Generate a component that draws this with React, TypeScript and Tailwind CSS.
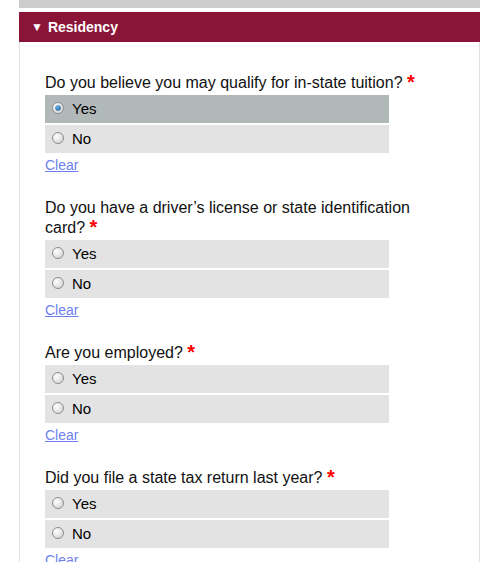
import React from 'react';

const questions = [
    { id: 'instate', text: 'Do you believe you may qualify for in-state tuition?', value: 'yes' },
    { id: 'license', text: 'Do you have a driver\u2019s license or state identification card?', value: '' },
    { id: 'employed', text: 'Are you employed?', value: '' },
    { id: 'tax', text: 'Did you file a state tax return last year?', value: '' },
];

const Radio = ({ checked }: { checked: boolean }) => (
    <svg width="12" height="12" viewBox="0 0 12 12" className="shrink-0">
        <defs>
            <radialGradient id="rbg" cx="0.35" cy="0.35" r="0.8">
                <stop offset="0" stopColor="#ffffff" />
                <stop offset="1" stopColor="#d0d0d0" />
            </radialGradient>
            <radialGradient id="rdot" cx="0.4" cy="0.35" r="0.7">
                <stop offset="0" stopColor="#6fb4ec" />
                <stop offset="1" stopColor="#1d5f9f" />
            </radialGradient>
        </defs>
        <circle cx="6" cy="6" r="5.5" fill="url(#rbg)" stroke="#8b8e90" strokeWidth="1" />
        {checked && <circle cx="6" cy="6" r="2.8" fill="url(#rdot)" />}
    </svg>
);

const Option = ({ label, checked }: { label: string; checked: boolean }) => (
    <label className={`flex items-center h-[28px] pl-[7px] gap-[8px] ${checked ? 'bg-[#b1b8b8]' : 'bg-[#e3e3e3]'}`}>
        <span className="-mt-[3px] flex"><Radio checked={checked} /></span>
        <span className="text-[15px] text-black">{label}</span>
    </label>
);

export default function App() {
    return (
        <div className="min-h-[562px] bg-white font-['Liberation_Sans',Arial,sans-serif]">
            <div className="ml-[19px] w-[461px]">
                <div className="h-[8px] bg-[#cccccc]" />
                <div className="mt-[4px] h-[30px] bg-[#8a1538] flex items-center pl-[12px] text-white font-bold text-[14px]">
                    <span className="text-[12px] mr-[5px]">▼</span>
                    <span>Residency</span>
                </div>
                <div className="border-x border-[#e0e0e0] pl-[25px] pt-[31px] pb-[20px]">
                    {questions.map((q) => (
                        <div key={q.id} className="mb-[24px]">
                            <p className="text-[16px] leading-[20px] text-[#111] w-[380px] mb-[2px]">
                                {q.text} <span className="text-[#ff0000] font-bold text-[20px] leading-[0] relative top-[1px]">*</span>
                            </p>
                            <div className="w-[344px] flex flex-col gap-[2px]">
                                <Option label="Yes" checked={q.value === 'yes'} />
                                <Option label="No" checked={q.value === 'no'} />
                            </div>
                            <a href="#" className="block w-fit mt-[4px] text-[14px] leading-[17px] text-[#6f7ff0] underline">Clear</a>
                        </div>
                    ))}
                </div>
            </div>
        </div>
    );
}
